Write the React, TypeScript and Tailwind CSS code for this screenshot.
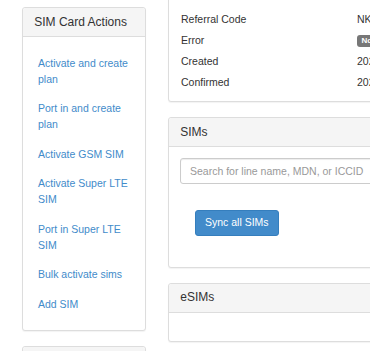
import React from "react";

const font = { fontFamily: '"Liberation Sans", Arial, sans-serif' };

const actions = [
  "Activate and create plan",
  "Port in and create plan",
  "Activate GSM SIM",
  "Activate Super LTE SIM",
  "Port in Super LTE SIM",
  "Bulk activate sims",
  "Add SIM",
];

const details: { label: string; value: React.ReactNode }[] = [
  { label: "Referral Code", value: "NK4R7QZ2" },
  {
    label: "Error",
    value: (
      <span className="inline-block rounded-[3px] bg-[#777] px-[4.5px] text-[8px] font-bold leading-[12px] text-white align-middle">
        None
      </span>
    ),
  },
  { label: "Created", value: "2021-08-12 14:32" },
  { label: "Confirmed", value: "2021-08-12 14:35" },
];

const Panel = ({ title, children, className = "" }: { title?: string; children: React.ReactNode; className?: string }) => (
  <div className={`rounded-[3px] border border-[#ddd] bg-white shadow-[0_1px_1px_rgba(0,0,0,0.05)] ${className}`}>
    {title && (
      <div className="rounded-t-[3px] border-b border-[#ddd] bg-[#f5f5f5] px-[11.25px] py-[6.5px] text-[12px] leading-[15px] text-[#333]">
        {title}
      </div>
    )}
    {children}
  </div>
);

export default function App() {
  return (
    <div className="flex h-[351px] w-[370px] gap-[22px] overflow-hidden bg-white pl-[22px] text-[10.5px] text-[#333]" style={font}>
      {/* Left column */}
      <div className="flex w-[124px] shrink-0 flex-col gap-[15.5px] pt-[7px]">
        <Panel title="SIM Card Actions">
          <div className="py-[11px] pl-[15px] pr-[12px]">
            {actions.map((a) => (
              <a key={a} href="#" className="block py-[6.75px] leading-[16px] text-[#428bca]">
                {a}
              </a>
            ))}
          </div>
        </Panel>
        <Panel title="Tools">
          <div className="h-[40px]" />
        </Panel>
      </div>

      {/* Right column */}
      <div className="flex w-[420px] shrink-0 flex-col gap-[15px]">
        <Panel className="-mt-[20px]">
          <div className="pb-[8.5px] pl-[12px] pt-[27.5px]">
            {details.map((d) => (
              <div key={d.label} className="grid h-[21px] grid-cols-[176px_1fr] items-center leading-[15px]">
                <span>{d.label}</span>
                <span>{d.value}</span>
              </div>
            ))}
          </div>
        </Panel>

        <Panel title="SIMs">
          <div className="px-[11px] pt-[11px] pb-[11px]">
            <input
              type="text"
              placeholder="Search for line name, MDN, or ICCID"
              className="block h-[25.5px] w-full rounded-[3px] border border-[#ccc] px-[9px] text-[10.5px] text-[#555] shadow-[inset_0_1px_1px_rgba(0,0,0,0.075)] outline-none placeholder:text-[#999]"
              style={font}
            />
            <div className="pl-[15px] pt-[26.5px] pb-[20px]">
              <button className="h-[25.5px] rounded-[3px] border border-[#357ebd] bg-[#428bca] px-[9px] text-[10.5px] leading-[15px] text-white">
                Sync all SIMs
              </button>
            </div>
          </div>
        </Panel>

        <Panel title="eSIMs">
          <div className="h-[28px]" />
        </Panel>
      </div>
    </div>
  );
}
